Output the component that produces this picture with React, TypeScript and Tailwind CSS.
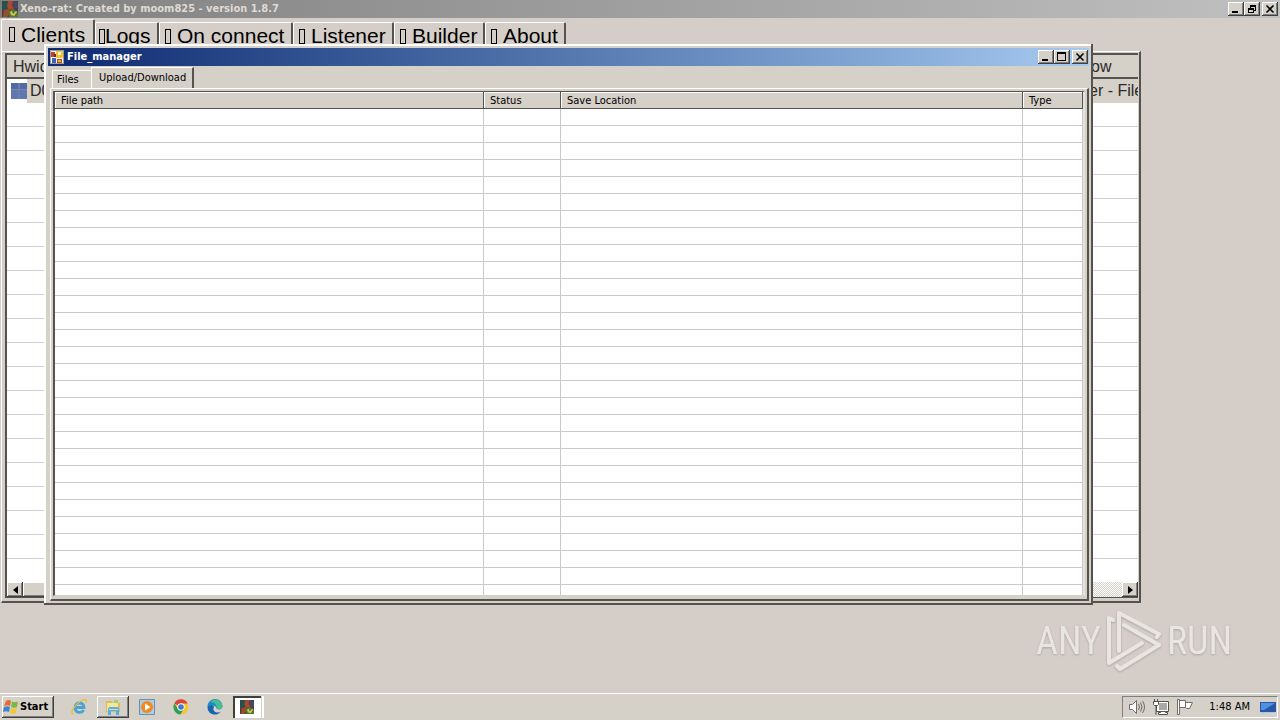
import type { ReactNode } from "react";

const raised =
  "bg-[#d5d0c8] shadow-[inset_-1px_-1px_0_#404040,inset_1px_1px_0_#ffffff,inset_-2px_-2px_0_#808080]";

const fileRows = Array.from({ length: 28 }, (_, i) => i);
const clientRows = Array.from({ length: 19 }, (_, i) => i);

function CaptionButton({ label, className = "", children }: { label: string; className?: string; children: ReactNode }) {
  return (
    <button type="button" aria-label={label} className={`flex h-[14px] w-4 items-center justify-center ${raised} ${className}`}>
      <svg width="10" height="10" viewBox="0 0 10 10" shapeRendering="crispEdges" fill="none" stroke="#000">
        {children}
      </svg>
    </button>
  );
}

function CaptionButtons({ restored = false }: { restored?: boolean }) {
  return (
    <div className="flex">
      <CaptionButton label="Minimize">
        <path d="M1 8h6" strokeWidth="2" />
      </CaptionButton>
      <CaptionButton label={restored ? "Restore" : "Maximize"}>
        {restored ? (
          <path d="M3 1h6M3 2h6M3.5 2v2M8.5 2v4.5H7M1 4.5h6M1 5h6M1.5 5v4M6.5 5v4M1 8.5h6" />
        ) : (
          <path d="M0 1h9M.5 1v8M8.5 1v8M0 8.5h9" strokeWidth="1.5" />
        )}
      </CaptionButton>
      <CaptionButton label="Close" className="ml-[2px]">
        <path d="M1.5 1.5l7 7M8.5 1.5l-7 7" strokeWidth="1.6" shapeRendering="auto" />
      </CaptionButton>
    </div>
  );
}

function RatIcon({ className }: { className: string }) {
  return (
    <svg className={className} viewBox="0 0 16 16" aria-hidden="true">
      <path fill="#5c3a35" d="M0 0h16v16H0z" />
      <path fill="#28504e" d="M0 0h5l2 5-3 4H0z" />
      <path fill="#a94834" d="M6 0h5l-1 4 2 4-5 1-2-4z" />
      <path fill="#41496b" d="M11 1h5v6l-4 1z" />
      <path fill="#944f2b" d="M2 9l5-1 1 4-3 4H1z" />
      <path fill="#4e7a38" d="M7 10l4-2 5 3v5H7z" />
      <path fill="#d6c34a" d="M8 11l2-1 1 3 3-3 1 1-3 4-3-1z" />
    </svg>
  );
}

function FormIcon() {
  return (
    <svg className="size-[14px]" viewBox="0 0 14 14" aria-hidden="true" shapeRendering="crispEdges">
      <path fill="#fff" d="M0 0h14v14H0z" />
      <path fill="#9c9a94" d="M0 0h14v1H0zM0 0h1v14H0zM13 0h1v14h-1zM0 13h14v1H0z" />
      <path fill="#c3412c" d="M1 2h4v5H1z" />
      <path fill="#efc33b" d="M6 1h7v7H6z" />
      <path fill="#3d62b8" d="M2 8h4v5H2z" />
      <path fill="#c3412c" d="M7 9h5v4H7z" />
      <path fill="#6b2d22" d="M4 4h2v3H4z" />
      <path fill="#fff3b1" d="M8 2h3v3H8z" />
      <path fill="#e9b62c" d="M8 10h3v2H8z" />
    </svg>
  );
}

function BigTab({ label, active = false, tight = false, width }: { label: string; active?: boolean; tight?: boolean; width: string }) {
  return (
    <button
      type="button"
      role="tab"
      aria-selected={active}
      className={`flex items-center whitespace-nowrap rounded-t-[2px] border-l border-t border-r-2 border-l-white border-t-white border-r-[#55534f] text-[21px] leading-6 ${width} ${
        active ? "h-8 pb-[2px] pl-[7px]" : tight ? "h-[29px] pb-[2px] pl-[3px]" : "h-[29px] pb-[2px] pl-[5px]"
      }`}
    >
      <span className={`h-[15px] w-[6px] shrink-0 border border-black ${tight ? "" : "mr-[6px]"}`} />
      {label}
    </button>
  );
}

function ClientList() {
  return (
    <section className="flex w-[1141px] flex-col pl-[1px] pt-[2px] font-['Liberation_Sans',Arial,sans-serif]">
      <div role="tablist" className="flex h-[31px] items-end">
        <BigTab label="Clients" active width="w-[94px]" />
        <BigTab label="Logs" tight width="w-[64px]" />
        <BigTab label="On connect" width="w-[134px]" />
        <BigTab label="Listener" width="w-[101px]" />
        <BigTab label="Builder" width="w-[91px]" />
        <BigTab label="About" width="w-[81px]" />
      </div>
      <div className="border-b-2 border-l border-r-2 border-t border-b-[#55534f] border-l-white border-r-[#55534f] border-t-white pb-[3px] pl-[3px] pr-[1px] pt-[1px]">
        <div className="border-b border-l-2 border-t-2 border-[#55534f]">
          <div className="h-[527px] overflow-hidden bg-white">
            <table className="w-full table-fixed border-separate border-spacing-0 text-base">
              <colgroup>
                <col className="w-[60px]" />
                <col />
                <col className="w-[49px]" />
              </colgroup>
              <thead>
                <tr className="bg-[#d5d0c8] text-left leading-5 text-[#2b2a28]">
                  <th className="border-b-2 border-[#55534f] p-0 pl-[6px] pt-[2px] font-normal">Hwid</th>
                  <th className="border-b-2 border-[#55534f] p-0" />
                  <th className="border-b-2 border-[#55534f] p-0 pl-[2px] pt-[2px] font-normal">ow</th>
                </tr>
              </thead>
              <tbody>
                <tr className="h-6 bg-[#d5d0c8] text-[#2b2a28]">
                  <td className="p-0 leading-6">
                    <div className="flex items-center gap-[3px]">
                      <span className="flex h-6 w-5 shrink-0 items-center justify-end bg-white">
                        <svg className="size-4" viewBox="0 0 16 16" aria-hidden="true">
                          <path fill="#6177ae" d="M0 0h16v16H0z" />
                          <path fill="#5169a4" d="M0 0h7v6H0zM9 0h7v6H9z" />
                          <path stroke="#7484b3" d="M0 6.500h16M8 0v16" />
                        </svg>
                      </span>
                      D0
                    </div>
                  </td>
                  <td className="p-0" />
                  <td className="whitespace-nowrap p-0 leading-6">er - File</td>
                </tr>
                {clientRows.map((row) => (
                  <tr key={row} className="h-6">
                    <td className="border-b border-[#cfcfcf] p-0" />
                    <td className="border-b border-[#cfcfcf] p-0" />
                    <td className="border-b border-[#cfcfcf] p-0" />
                  </tr>
                ))}
              </tbody>
            </table>
          </div>
          <div className="flex h-[15px] bg-[repeating-conic-gradient(#ffffff_0_25%,#d5d0c8_0_50%)] bg-[length:2px_2px]">
            <button type="button" aria-label="Scroll left" className={`flex w-4 items-center justify-center ${raised}`}>
              <svg width="5" height="8" viewBox="0 0 5 8"><path d="M5 0v8L0 4z" /></svg>
            </button>
            <div className={`w-[840px] ${raised}`} />
            <button type="button" aria-label="Scroll right" className={`ml-auto flex w-4 items-center justify-center ${raised}`}>
              <svg width="5" height="8" viewBox="0 0 5 8"><path d="M0 0v8l5-4z" /></svg>
            </button>
          </div>
        </div>
      </div>
    </section>
  );
}

function HeaderCell({ children }: { children: ReactNode }) {
  return (
    <th className="h-[17px] bg-[#d5d0c8] p-0 pl-[6px] text-left font-normal leading-[15px] shadow-[inset_-1px_-1px_0_#55534f,inset_1px_1px_0_#ffffff]">
      {children}
    </th>
  );
}

function FileManager() {
  return (
    <section
      aria-label="File_manager"
      className="absolute left-[44px] top-[44px] flex h-[561px] w-[1049px] flex-col bg-[#d5d0c8] p-1 shadow-[inset_-2px_-2px_0_#55534f,inset_2px_2px_0_#ffffff]"
    >
      <header className="flex h-[18px] shrink-0 items-center justify-between bg-linear-to-r from-[#0f2a70] to-[#a6caf0] pl-[2px] pr-[1px] text-white">
        <div className="flex items-center gap-[3px]">
          <FormIcon />
          <h2 className="font-bold">File_manager</h2>
        </div>
        <CaptionButtons />
      </header>
      <div role="tablist" className="flex h-[22px] shrink-0 items-end pl-1">
        <button type="button" role="tab" aria-selected={false} className="h-[18px] w-[39px] border-l border-t border-white pl-1 text-left">
          Files
        </button>
        <button type="button" role="tab" aria-selected className="h-[21px] w-[103px] border-l border-r-2 border-t border-l-white border-r-[#55534f] border-t-white pb-[1px] pl-[7px] text-left">
          Upload/Download
        </button>
      </div>
      <div className="ml-[2px] flex min-h-0 flex-1 border-b-2 border-l border-r-2 border-t border-b-[#55534f] border-l-white border-r-[#55534f] border-t-white pb-[3px] pl-[2px] pr-[2px] pt-[2px]">
        <div className="flex-1 overflow-hidden border-b border-l-2 border-r-2 border-t border-b-[#d5d0c8] border-l-[#55534f] border-r-[#e4e2da] border-t-[#55534f] bg-white">
          <table className="w-full table-fixed border-separate border-spacing-0">
            <colgroup>
              <col className="w-[429px]" />
              <col className="w-[77px]" />
              <col />
              <col className="w-[60px]" />
            </colgroup>
            <thead>
              <tr>
                <HeaderCell>File path</HeaderCell>
                <HeaderCell>Status</HeaderCell>
                <HeaderCell>Save Location</HeaderCell>
                <HeaderCell>Type</HeaderCell>
              </tr>
            </thead>
            <tbody>
              {fileRows.map((row) => (
                <tr key={row} className="h-[17px]">
                  <td className="border-b border-r border-[#c9c9c9] p-0" />
                  <td className="border-b border-r border-[#c9c9c9] p-0" />
                  <td className="border-b border-r border-[#c9c9c9] p-0" />
                  <td className="border-b border-r border-[#c9c9c9] p-0" />
                </tr>
              ))}
              <tr className="h-4">
                <td className="border-r border-[#c9c9c9] p-0" />
                <td className="border-r border-[#c9c9c9] p-0" />
                <td className="border-r border-[#c9c9c9] p-0" />
                <td className="border-r border-[#c9c9c9] p-0" />
              </tr>
            </tbody>
          </table>
        </div>
      </div>
    </section>
  );
}

function Watermark() {
  return (
    <div className="absolute bottom-[20px] right-[48px] flex items-center font-['Roboto_Condensed','Open_Sans_Condensed','DejaVu_Sans_Condensed',sans-serif] text-[38px] leading-[64px] text-[#e9e6e1] drop-shadow-[0_1px_1px_#aaa59f]">
      <span>ANY</span>
      <svg className="ml-1 mr-[6px] h-16 w-14" viewBox="0 0 56 64" fill="none" stroke="#e9e6e1" strokeWidth="4" strokeLinejoin="round" strokeLinecap="round" aria-hidden="true">
        <path d="M8 11L4 9V54L37 34" />
        <path d="M14 42V4L54 25L52 28" />
        <path d="M19 16L54 36L15 60L12 57" />
      </svg>
      <span>RUN</span>
    </div>
  );
}

function TaskButton({ label, className = "", children }: { label: string; className?: string; children: ReactNode }) {
  return (
    <button type="button" aria-label={label} className={`flex h-[22px] items-center justify-center ${className}`}>
      {children}
    </button>
  );
}

function Taskbar() {
  return (
    <footer className="flex h-[27px] shrink-0 items-start border-t border-white bg-[#d5d0c8] px-[2px] pt-[2px]">
      <button type="button" className={`flex h-[22px] w-[52px] items-center gap-[1px] pl-[1px] text-[11px] font-bold ${raised}`}>
        <svg className="size-4 shrink-0" viewBox="0 0 16 16" aria-hidden="true">
          <path fill="#e66b32" d="M3 2q3-2 5 0L7 7q-3-1.500-6 0z" />
          <path fill="#79b843" d="M9 2.500q3 1.500 6 0L14 8q-3 1.500-6 0z" />
          <path fill="#3d82cc" d="M1 8q3-1.500 6 0L6 13q-3-1.500-6 0z" />
          <path fill="#f4c62f" d="M8 9q3 1.500 6 0l-1 5q-3 1.500-6 0z" />
        </svg>
        Start
      </button>
      <TaskButton label="Internet Explorer" className="ml-[9px] w-8">
        <svg className="size-[18px]" viewBox="0 0 18 18" fill="none" aria-hidden="true">
          <path stroke="#4ba3d4" strokeWidth="2.800" d="M5 9.500h9c0-6-9-6-9 0 0 6 7 6 8.500 2.500" />
          <path stroke="#e5bf3c" strokeWidth="1.300" d="M3 16c-4-1 3-11 10-14 3-1 4 0 3 3" />
        </svg>
      </TaskButton>
      <TaskButton label="File Explorer" className={`ml-[2px] w-8 ${raised}`}>
        <svg className="size-[18px]" viewBox="0 0 18 18" aria-hidden="true">
          <path fill="#dabb60" d="M2 3h6l1 2h7v9H2z" />
          <path fill="#f7e59a" d="M3 5h11v8H3z" />
          <path fill="#a7cb71" d="M10 2h4v3h-4z" />
          <path fill="#5aafd9" d="M4 17v-6q0-2 2-2h7q2 0 2 2v6h-3v-4H7v4z" />
          <path fill="#b6e1f2" d="M5 11h9v1H5z" />
        </svg>
      </TaskButton>
      <TaskButton label="Media Player" className="ml-[2px] w-8">
        <svg className="size-4" viewBox="0 0 16 16" aria-hidden="true">
          <path fill="#a9cee7" stroke="#668fb5" d="M.5.5h15v15H.5z" />
          <circle cx="8" cy="8" r="6" fill="#f28a20" />
          <path fill="#fff" d="M6 4.500v7L11.500 8z" />
        </svg>
      </TaskButton>
      <TaskButton label="Chrome" className="ml-[2px] w-8">
        <svg className="size-4" viewBox="0 0 16 16" aria-hidden="true">
          <circle cx="8" cy="8" r="7.500" fill="#f7c72e" />
          <path fill="#dc4437" d="M8 8L1.300 4.500A7.500 7.500 0 0 1 14.700 4.500H8z" />
          <path fill="#2f9d58" d="M1.300 4.500A7.500 7.500 0 0 0 7.500 15.500L11 9.500 5 10z" />
          <circle cx="8" cy="8" r="3.700" fill="#fff" />
          <circle cx="8" cy="8" r="2.800" fill="#4179d2" />
        </svg>
      </TaskButton>
      <TaskButton label="Edge" className="ml-[2px] w-8">
        <svg className="size-4" viewBox="0 0 16 16" aria-hidden="true">
          <path fill="#2089c9" d="M.5 8A7.500 7.500 0 0 1 15.500 7c0 3-3 4-5.500 3C9 6 4 5 .5 8z" />
          <path fill="#47bd91" d="M3 3q7-6 12 2 2 5-4 5c-2 0-2-1-1.500-2C10 4 5 3 3 3z" />
          <path fill="#1766ad" d="M.5 8c4-4 8-1 6 1-1 3 3 6 7.500 3.500C10 18 .5 16 .5 8z" />
        </svg>
      </TaskButton>
      <TaskButton label="Xeno-rat" className="ml-[2px] w-7 bg-white shadow-[inset_2px_2px_0_#403e3b,inset_-1px_-1px_0_#ffffff]">
        <RatIcon className="h-4 w-[14px]" />
      </TaskButton>
      <span className="ml-[1px] h-[22px] border-r-2 border-white" />
      <div className="ml-auto flex h-[22px] items-center border border-b-white border-l-[#808080] border-r-white border-t-[#808080] pl-[5px] pr-[1px]">
        <svg className="size-[18px]" viewBox="0 0 18 18" fill="#fff" stroke="#6f6d69" aria-hidden="true">
          <path d="M1.500 6.500h3l4-4v13l-4-4h-3z" />
          <path fill="none" d="M10.500 6q2 3 0 6M12.500 4.500q3 4.500 0 9M14.500 3q4 6 0 12" />
        </svg>
        <svg className="ml-[6px] size-[18px]" viewBox="0 0 18 18" fill="none" stroke="#55534f" aria-hidden="true">
          <path fill="#fff" d="M4.500 3.500h12v10h-12z" />
          <path fill="#aaa8a4" stroke="none" d="M7 5h8v7H7z" />
          <path fill="#fff" d="M8.500 13.500h5v1h2v2h-9v-2h2zM1.500 3.500h5v3l-1 1h-3l-1-1z" />
          <path d="M2.500 1v2M5.500 1v2M4 8v9" />
        </svg>
        <svg className="ml-[6px] size-[18px]" viewBox="0 0 18 18" fill="#fff" stroke="#6f6d69" aria-hidden="true">
          <path d="M1.500 1.500h2v15h-2zM3.500 2.500h6v7h-6zM9.500 4.500h7l-3 6h-3l-1-1z" />
        </svg>
        <time className="ml-[15px]">1:48 AM</time>
        <svg className="ml-[10px] h-[15px] w-4" viewBox="0 0 16 15" aria-label="Show desktop">
          <path fill="#2a56a8" d="M0 2h16v10H0z" />
          <path fill="#4d91df" d="M1 3h14L4 10H1z" />
          <path fill="#a8c9ea" d="M1 12h4v2H1zM6 12h9v1H6z" />
        </svg>
      </div>
    </footer>
  );
}

export default function App() {
  return (
    <div className="flex min-h-screen flex-col bg-[#d5cec8] font-['DejaVu_Sans_Condensed','DejaVu_Sans',sans-serif] text-[11px] leading-[14px] text-black">
      <header className="flex h-[18px] shrink-0 items-center justify-between bg-linear-to-r from-[#808080] to-[#c0c0c0] pl-[2px] pr-[2px] text-[#dedad4]">
        <div className="flex items-center gap-[2px]">
          <RatIcon className="size-4" />
          <h1 className="font-bold">Xeno-rat: Created by moom825 - version 1.8.7</h1>
        </div>
        <CaptionButtons restored />
      </header>
      <main className="flex-1">
        <ClientList />
      </main>
      <FileManager />
      <div className="relative">
        <Watermark />
      </div>
      <Taskbar />
    </div>
  );
}
